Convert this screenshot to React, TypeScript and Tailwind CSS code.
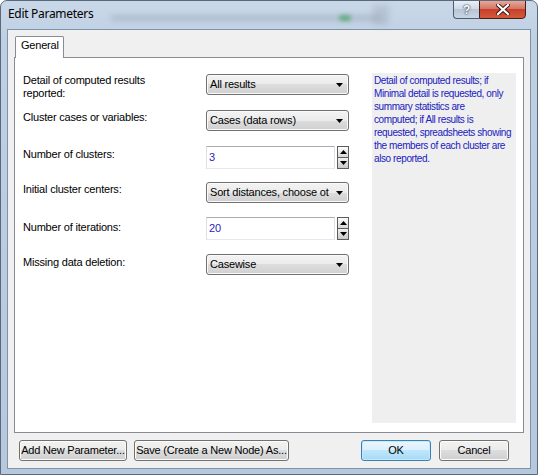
import type { ReactNode } from 'react';

// Combo box in the Windows 7 style
function Combo({ value }: { value: string }) {
  return (
    <div className="flex items-center w-[143px] h-[21px] border border-[#707070] rounded-[3px] bg-[linear-gradient(#f3f3f3,#ebebeb_50%,#dddddd_50%,#d0d0d0)] shadow-[inset_0_0_0_1px_#fafafa]">
      <div className="w-[126px] overflow-hidden whitespace-nowrap pl-[3px] leading-[13px]">{value}</div>
      <div className="flex-1" />
      <svg width="7" height="4" viewBox="0 0 7 4" className="mr-[5px] shrink-0">
        <path d="M0 0h7L3.5 4z" fill="#000" />
      </svg>
    </div>
  );
}

// Text box with up/down spinner
function SpinInput({ value }: { value: string }) {
  return (
    <div className="flex items-stretch h-[23px]">
      <div className="w-[129px] border border-[#abadb3] border-x-[#dbdfe6] border-b-[#e3e9ef] bg-white pl-[2px] flex items-center text-[#2727b8] leading-[13px]">
        {value}
      </div>
      <div className="ml-[2px] w-[12px] flex flex-col border border-[#5c5c5c] bg-[#8a8a8a]">
        <div className="flex-1 flex items-center justify-center bg-[linear-gradient(#fdfdfd,#d8d8d8)] border-b border-[#5c5c5c]">
          <svg width="7" height="4" viewBox="0 0 7 4">
            <path d="M0 4h7L3.5 0z" fill="#000" />
          </svg>
        </div>
        <div className="flex-1 flex items-center justify-center bg-[linear-gradient(#f0f0f0,#c9c9c9)]">
          <svg width="7" height="4" viewBox="0 0 7 4">
            <path d="M0 0h7L3.5 4z" fill="#000" />
          </svg>
        </div>
      </div>
    </div>
  );
}

function Button({ children, className, isDefault }: { children: ReactNode; className: string; isDefault?: boolean }) {
  return (
    <div
      className={
        'h-[21px] flex items-center justify-center rounded-[3px] border leading-[13px] ' +
        (isDefault
          ? 'border-[#3c7fb1] bg-[linear-gradient(#eaf6fd,#d9f0fc_50%,#bee6fd_50%,#a7d9f5)] shadow-[inset_0_0_0_1px_#c6e9fb] '
          : 'border-[#707070] bg-[linear-gradient(#f2f2f2,#ebebeb_50%,#dddddd_50%,#cfcfcf)] shadow-[inset_0_0_0_1px_#fcfcfc] ') +
        className
      }
    >
      {children}
    </div>
  );
}

type Row = {
  label: string[];
  kind: 'combo' | 'spin';
  value: string;
  rowH: string;
  labelPt: string;
};

const rows: Row[] = [
  { label: ['Detail of computed results', 'reported:'], kind: 'combo', value: 'All results', rowH: 'h-[36px]', labelPt: 'pt-0' },
  { label: ['Cluster cases or variables:'], kind: 'combo', value: 'Cases (data rows)', rowH: 'h-[36px]', labelPt: 'pt-[1px]' },
  { label: ['Number of clusters:'], kind: 'spin', value: '3', rowH: 'h-[36px]', labelPt: 'pt-[2px]' },
  { label: ['Initial cluster centers:'], kind: 'combo', value: 'Sort distances, choose ot', rowH: 'h-[35px]', labelPt: 'pt-[1px]' },
  { label: ['Number of iterations:'], kind: 'spin', value: '20', rowH: 'h-[37px]', labelPt: 'pt-[4px]' },
  { label: ['Missing data deletion:'], kind: 'combo', value: 'Casewise', rowH: 'h-[36px]', labelPt: 'pt-[2px]' },
];

export default function App() {
  return (
    <div className="w-[538px] h-[475px] bg-white">
      <div className="relative w-[538px] h-[475px] rounded-t-[7px] border border-[#5a6a7c] bg-[linear-gradient(#c9d8e9,#bfd0e3_40px,#b5c8dd)] overflow-hidden font-['Liberation_Sans',Arial,sans-serif] text-[11px] tracking-[-0.2px] text-black">
        {/* glass blur behind title bar */}
        <div className="absolute left-[110px] top-[15px] w-[270px] h-[4px] bg-[#6f7b88] opacity-40 blur-[3px]" />
        <div className="absolute left-[338px] top-[14px] w-[12px] h-[6px] bg-[#2f9a48] opacity-60 blur-[2px] rounded-full" />
        <div className="absolute left-[372px] top-[4px] w-[16px] h-[20px] bg-[#8d98a6] opacity-30 blur-[3px]" />

        {/* title bar */}
        <div className="relative h-[29px] pl-[7px] pt-[5px] font-['Noto_Sans',sans-serif] text-[12px] tracking-[-0.3px] leading-[16px]">
          Edit Parameters
        </div>

        {/* caption buttons */}
        <div className="absolute top-[-1px] left-[452px] flex">
          <div className="w-[26px] h-[19px] flex items-center justify-center rounded-bl-[4px] border border-[#4d5d70] border-r-0 bg-[linear-gradient(#e9eff6,#cdd8e5_50%,#b6c5d7_50%,#c9d6e4)] text-white font-bold font-['Liberation_Sans',sans-serif] text-[12px] [text-shadow:0_0_2px_#28384a,0_0_1px_#28384a]">
            ?
          </div>
          <div className="w-[47px] h-[19px] flex items-center justify-center rounded-br-[4px] border border-[#4a1d16] bg-[linear-gradient(#e6a89a,#d5705f_50%,#c6412c_50%,#d25a3c)]">
            <svg width="14" height="11" viewBox="0 0 14 11">
              <path d="M2 1l10 9M12 1L2 10" stroke="#3a1510" strokeWidth="4" strokeLinecap="square" />
              <path d="M2 1l10 9M12 1L2 10" stroke="#fff" strokeWidth="2.2" strokeLinecap="square" />
            </svg>
          </div>
        </div>

        {/* client area */}
        <div className="ml-[7px] w-[522px] h-[438px] bg-[#f0f0f0] shadow-[0_0_0_1px_#7e92a8]">
          {/* tab strip */}
          <div className="pl-[7px] pt-[6px] flex">
            <div className="relative z-10 w-[49px] h-[22px] -mb-[1px] border border-b-0 border-[#898c95] rounded-t-[2px] bg-white pl-[5px] pt-[2px] leading-[13px]">
              General
            </div>
          </div>

          {/* tab panel */}
          <div className="ml-[6px] w-[510px] h-[376px] border border-[#898c95] bg-white flex">
            <div className="flex-1 pl-[8px] pt-[16px]">
              {rows.map((r) => (
                <div key={r.label[0]} className={'flex items-start ' + r.rowH}>
                  <div className={'w-[183px] leading-[13px] ' + r.labelPt}>
                    {r.label.map((l) => (
                      <div key={l}>{l}</div>
                    ))}
                  </div>
                  {r.kind === 'combo' ? <Combo value={r.value} /> : <SpinInput value={r.value} />}
                </div>
              ))}
            </div>

            {/* help text */}
            <div className="mt-[15px] mr-[7px] w-[144px] h-[350px] bg-[#efefef] pl-[2px] pt-[1px] text-[10px] leading-[13px] tracking-[-0.4px] text-[#2020c0] whitespace-nowrap">
              Detail of computed results; if
              <br />
              Minimal detail is requested, only
              <br />
              summary statistics are
              <br />
              computed; if All results is
              <br />
              requested, spreadsheets showing
              <br />
              the members of each cluster are
              <br />
              also reported.
            </div>
          </div>

          {/* bottom buttons */}
          <div className="flex mt-[7px] pl-[11px] pr-[21px]">
            <Button className="w-[108px]">Add New Parameter...</Button>
            <Button className="ml-[7px] w-[155px]">Save (Create a New Node) As...</Button>
            <div className="flex-1" />
            <Button isDefault className="w-[70px]">OK</Button>
            <Button className="ml-[8px] w-[70px]">Cancel</Button>
          </div>
        </div>
      </div>
    </div>
  );
}
